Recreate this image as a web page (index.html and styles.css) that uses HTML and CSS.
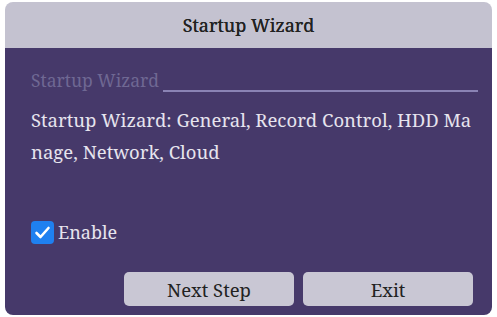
FILE: index.html
```
<!DOCTYPE html>
<html lang="en">
<head>
  <meta charset="UTF-8" />
  <title>Startup Wizard</title>
  <link rel="stylesheet" href="styles.css">
</head>
<body>

  <!-- wizard window -->
  <div class="window">
    <div class="title">Startup Wizard</div>

    <div class="content">
      <div class="label-row">
        <span class="label">Startup Wizard</span>
        <span class="rule"></span>
      </div>

      <p class="desc">Startup Wizard: General, Record Control, HDD Manage, Network, Cloud</p>

      <label class="check-row">
        <span class="check">
          <svg width="17" height="17" viewBox="0 0 17 17">
            <path d="M2.5 9 L6.5 13 L14.5 4" fill="none" stroke="#fff" stroke-width="2.6" stroke-linecap="round" stroke-linejoin="round"/>
          </svg>
        </span>
        <span>Enable</span>
      </label>

      <div class="buttons">
        <button class="btn">Next Step</button>
        <button class="btn">Exit</button>
      </div>
    </div>
  </div>

</body>
</html>
```

FILE: styles.css
```
body {
  margin: 0;
  background: #fff;
  font-family: "Noto Serif", "Liberation Serif", serif;
}

.window {
  margin: 2px 5px 0 5px;
  width: 487px;
  height: 313px;
  border-radius: 8px;
  overflow: hidden;
  display: flex;
  flex-direction: column;
}

.title {
  height: 46px;
  background: #c4c2d0;
  color: #222;
  font-size: 18px;
  display: flex;
  align-items: center;
  justify-content: center;
  text-shadow: 0 0 0.6px #222;
}

.content {
  flex: 1;
  background: #46396a;
  padding: 20px 14px 0 26px;
  color: #e6e4ee;
  font-size: 18.5px;
}

.label-row {
  display: flex;
  align-items: flex-end;
}

.label {
  font-size: 17.5px;
  line-height: 24px;
  color: #6f6893;
}

.rule {
  flex: 1;
  height: 2px;
  margin-left: 4px;
  background: #8a83b4;
}

.desc {
  margin: 12px 5px 0 0;
  line-height: 32px;
  word-break: break-all;
}

.check-row {
  margin-top: 51px;
  height: 26px;
  display: flex;
  align-items: center;
  gap: 4px;
  font-size: 18px;
}

.check {
  width: 23px;
  height: 23px;
  border-radius: 4px;
  background: #1f80f0;
  display: flex;
  align-items: center;
  justify-content: center;
}

.buttons {
  margin-top: 27px;
  margin-right: 5px;
  display: flex;
  justify-content: flex-end;
  gap: 9px;
}

.btn {
  width: 170px;
  height: 34px;
  border: none;
  border-radius: 5px;
  background: #c9c7d4;
  color: #222;
  font-family: inherit;
  font-size: 18.5px;
  padding: 0;
}
```
